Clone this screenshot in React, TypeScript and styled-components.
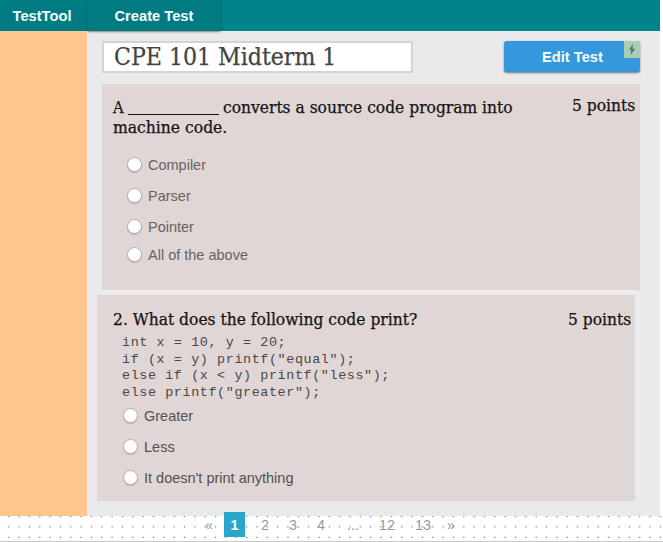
import React from 'react';
import styled, { createGlobalStyle } from 'styled-components';

const GlobalStyle = createGlobalStyle`
  * { box-sizing: border-box; }
  body { margin: 0; background: #fff; font-family: "Liberation Sans", Arial, sans-serif; }
`;

const Page = styled.div`
  width: 663px;
  height: 542px;
  overflow: hidden;
  display: flex;
  flex-direction: column;
`;

const TopBar = styled.nav`
  position: relative;
  z-index: 1;
  width: 660px;
  height: 31px;
  flex: none;
  display: flex;
  background: #00838b;
  color: #f4ffff;
  font-size: 14.7px;
  font-weight: bold;
  line-height: 32px;
`;

const Brand = styled.div`
  width: 87px;
  padding-left: 12.5px;
  background: #007b82;
`;

const NavTab = styled.div`
  width: 133.5px;
  height: 31px;
  padding-left: 27.5px;
  background: #007b82;
  border-radius: 0 0 3px 3px;
  box-shadow: 0 1px 2px rgba(0, 0, 0, 0.45);
`;

const Body = styled.div`
  width: 660px;
  height: 485px;
  flex: none;
  display: flex;
  background: #eaeaea;
`;

const Sidebar = styled.aside`
  width: 87px;
  flex: none;
  background: #ffc58f;
`;

const Main = styled.main`
  flex: 1;
  padding: 10px 0 0 10px;
`;

const Header = styled.header`
  height: 43px;
  display: flex;
  justify-content: space-between;
  padding: 0 20px 0 5px;
`;

const TitleField = styled.div`
  width: 311px;
  height: 32px;
  border: 2px solid #d4d4d4;
  background: #fff;
  padding-left: 9.5px;
`;

const EditButton = styled.div`
  position: relative;
  width: 136px;
  height: 31px;
  border-radius: 3px;
  background: #3598dc;
  color: #f5fbff;
  box-shadow: 0 1px 2px rgba(0, 0, 0, 0.5);
  font-size: 14.7px;
  font-weight: bold;
  line-height: 32px;
  padding-left: 38px;
`;

const BoltBadge = styled.span`
  position: absolute;
  top: 0;
  right: 0;
  width: 16px;
  height: 17px;
  background: #a9ccb3;
  display: flex;
  align-items: center;
  justify-content: center;
`;

const Slab = styled.div<{ $size: number; $line: number; $stretch?: number; $color?: string }>`
  font-family: "DejaVu Serif Condensed", "DejaVu Serif", serif;
  font-stretch: condensed;
  font-size: ${(p) => p.$size}px;
  line-height: ${(p) => p.$line}px;
  color: ${(p) => p.$color ?? '#161414'};
  -webkit-text-stroke: 0.25px currentColor;
  white-space: pre;
  width: max-content;
  transform: scaleX(${(p) => p.$stretch ?? 1});
  transform-origin: 0 0;
`;

const Card = styled.section<{ $shift: number; $height: number; $top: number }>`
  width: 538px;
  height: ${(p) => p.$height}px;
  margin-left: ${(p) => p.$shift}px;
  margin-bottom: 5px;
  padding: ${(p) => p.$top}px 0 0 ${(p) => 16 - p.$shift}px;
  background: #e0d6d5;
`;

const QuestionRow = styled.div<{ $height: number }>`
  display: flex;
  height: ${(p) => p.$height}px;
`;

const Prompt = styled.div<{ $width: number }>`
  width: ${(p) => p.$width}px;
  flex: none;
`;

const Points = styled.div<{ $lift: number }>`
  margin-top: ${(p) => -p.$lift}px;
`;

const BlankLine = styled.div`
  display: flex;
  height: 20px;
`;

const Blank = styled.span`
  width: 91px;
  height: 17px;
  margin: 0 3.5px 0 4.5px;
  border-bottom: 1.5px solid #161414;
`;

const Choice = styled.label<{ $gap: number; $indent: number; $color: string }>`
  display: flex;
  align-items: flex-start;
  height: 16px;
  margin: 0 0 ${(p) => p.$gap}px ${(p) => p.$indent}px;
  color: ${(p) => p.$color};
  font-size: 14.5px;
  line-height: 18px;
  white-space: nowrap;
`;

const Radio = styled.span`
  width: 15px;
  height: 15px;
  margin: 1px 6px 0 0;
  border: 1px solid #b5afaf;
  border-radius: 50%;
  background: #fff;
  box-shadow: 0 1px 1px rgba(0, 0, 0, 0.16);
`;

const Code = styled.pre`
  height: 68px;
  margin: 0 0 5px 9px;
  padding-top: 1px;
  font-family: "Liberation Mono", "Courier New", monospace;
  font-size: 13.4px;
  letter-spacing: 0.61px;
  line-height: 16.6px;
  color: #4c4747;
`;

const Pager = styled.footer`
  width: 663px;
  height: 26px;
  flex: none;
  display: flex;
  border-bottom: 1px solid #c6c6c6;
  background-image: radial-gradient(circle at 50% 50%, #888 0, #999 0.65px, transparent 1.1px);
  background-size: 10.344px 10.5px;
  background-position: 3.5px -4.9px;
`;

const PageLink = styled.span<{ $left: number; $width: number; $size?: number }>`
  margin-left: ${(p) => p.$left}px;
  width: ${(p) => p.$width}px;
  font-size: ${(p) => p.$size ?? 14.4}px;
  line-height: 18px;
  color: #999;
  white-space: nowrap;
`;

const CurrentPage = styled.span`
  width: 21px;
  height: 25px;
  margin: -4px 0 0 10px;
  background: #2ba6cb;
  color: #fff;
  font-size: 14.4px;
  font-weight: bold;
  line-height: 26px;
  text-align: center;
`;

const firstChoices = [
  { text: 'Compiler', gap: 15 },
  { text: 'Parser', gap: 15 },
  { text: 'Pointer', gap: 12 },
  { text: 'All of the above', gap: 0 },
];

const secondChoices = ['Greater', 'Less', "It doesn't print anything"];

const program = `int x = 10, y = 20;
if (x = y) printf("equal");
else if (x < y) printf("less");
else printf("greater");`;

export default function App() {
  return (
    <Page>
      <GlobalStyle />
      <TopBar>
        <Brand>TestTool</Brand>
        <NavTab>Create Test</NavTab>
      </TopBar>
      <Body>
        <Sidebar />
        <Main>
          <Header>
            <TitleField>
              <Slab $size={24} $line={28} $stretch={1.023} $color="#444">CPE 101 Midterm 1</Slab>
            </TitleField>
            <EditButton>
              Edit Test
              <BoltBadge>
                <svg width="8" height="11" viewBox="0 0 8 11">
                  <path d="M4.8 0 0.8 6.2 3.3 5.7 2.7 11 7.2 4.4 4.6 4.9Z" fill="#48777b" />
                </svg>
              </BoltBadge>
            </EditButton>
          </Header>
          <Card $shift={5} $height={206} $top={14}>
            <QuestionRow $height={58}>
              <Prompt $width={459}>
                <BlankLine>
                  <Slab $size={16.5} $line={20}>A</Slab>
                  <Blank />
                  <Slab $size={16.5} $line={20} $stretch={1.045}>converts a source code program into</Slab>
                </BlankLine>
                <Slab $size={16.5} $line={20} $stretch={1.05}>machine code.</Slab>
              </Prompt>
              <Points $lift={3}>
                <Slab $size={16.5} $line={21} $stretch={1.045}>5 points</Slab>
              </Points>
            </QuestionRow>
            {firstChoices.map((c) => (
              <Choice key={c.text} $gap={c.gap} $indent={14} $color="#686363">
                <Radio />
                {c.text}
              </Choice>
            ))}
          </Card>
          <Card $shift={0} $height={206} $top={14}>
            <QuestionRow $height={25}>
              <Prompt $width={455}>
                <Slab $size={16.5} $line={21} $stretch={1.046}>2. What does the following code print?</Slab>
              </Prompt>
              <Points $lift={0}>
                <Slab $size={16.5} $line={21} $stretch={1.045}>5 points</Slab>
              </Points>
            </QuestionRow>
            <Code>{program}</Code>
            {secondChoices.map((text) => (
              <Choice key={text} $gap={15} $indent={10} $color="#555050">
                <Radio />
                {text}
              </Choice>
            ))}
          </Card>
        </Main>
      </Body>
      <Pager>
        <PageLink $left={205} $width={9}>«</PageLink>
        <CurrentPage>1</CurrentPage>
        <PageLink $left={16} $width={9}>2</PageLink>
        <PageLink $left={19} $width={9}>3</PageLink>
        <PageLink $left={19} $width={9}>4</PageLink>
        <PageLink $left={21} $width={13}>...</PageLink>
        <PageLink $left={19} $width={17}>12</PageLink>
        <PageLink $left={19} $width={17}>13</PageLink>
        <PageLink $left={15} $width={9}>»</PageLink>
      </Pager>
    </Page>
  );
}
